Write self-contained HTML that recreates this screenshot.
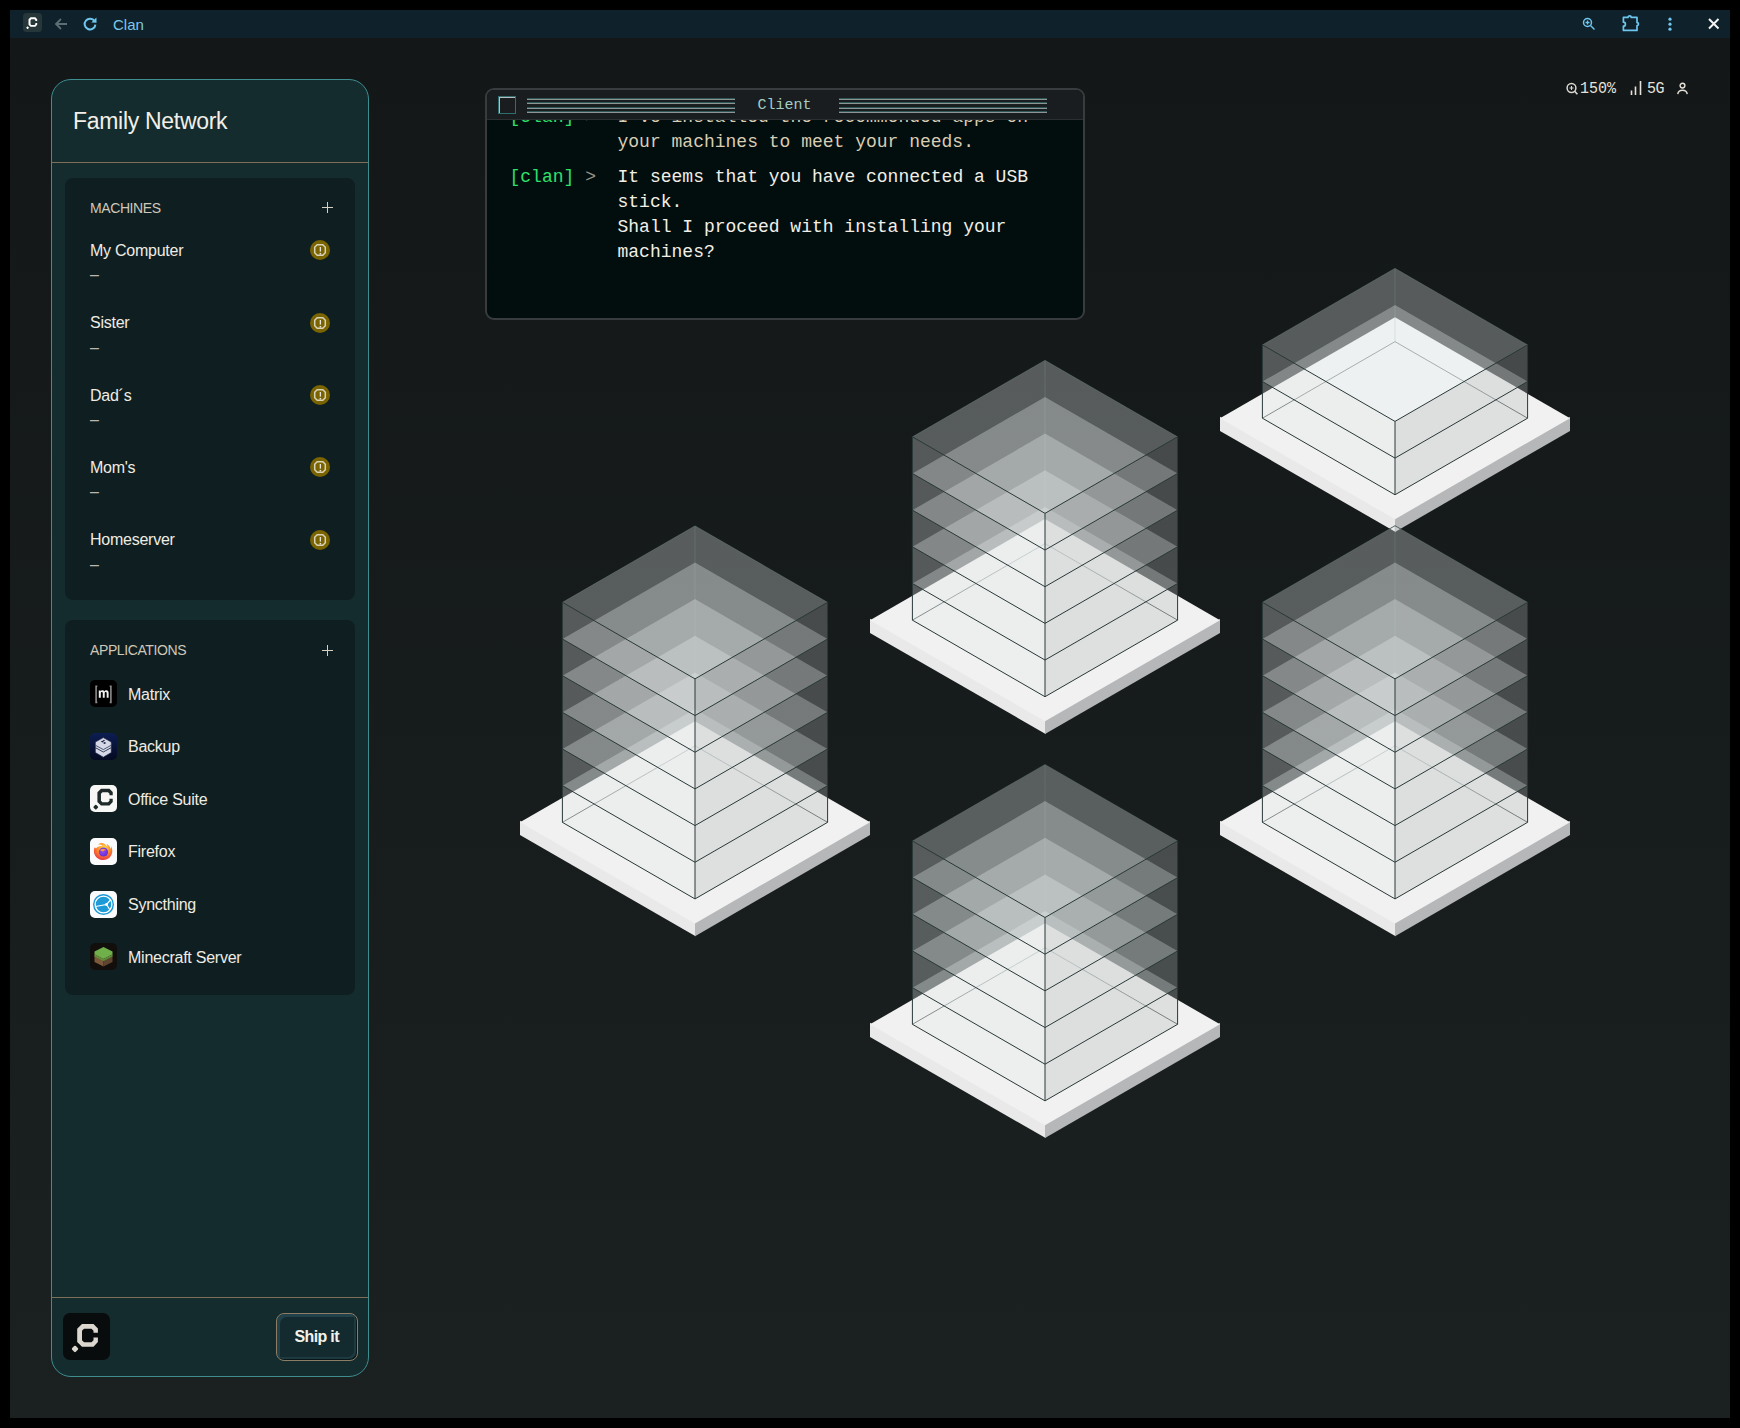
<!DOCTYPE html>
<html><head><meta charset="utf-8">
<style>
*{margin:0;padding:0;box-sizing:border-box}
html,body{width:1740px;height:1428px;background:#000;overflow:hidden;font-family:"Liberation Sans",sans-serif}
.a{position:absolute}
#main{left:10px;top:38px;width:1720px;height:1380px;background:linear-gradient(#131718,#1b2020)}
#tb{left:10px;top:10px;width:1720px;height:28px;background:#0f212a}
#scene{position:absolute;left:0;top:0}
#sb{left:51px;top:79px;width:318px;height:1298px;border:1px solid #3e8e90;border-radius:20px;background:#142c2e}
.t{position:absolute;white-space:nowrap;line-height:1}
.panel{position:absolute;left:65px;width:290px;background:#0f1f21;border-radius:8px}
.hdr{font-size:14px;color:#cfc8b8;letter-spacing:-0.4px}
.plus{position:absolute;width:11px;height:11px}
.plus:before{content:"";position:absolute;left:0;top:5px;width:11px;height:1.4px;background:#d6d0c2}
.plus:after{content:"";position:absolute;left:5px;top:0;width:1.4px;height:11px;background:#d6d0c2}
.mname{font-size:16px;color:#f0ece4;letter-spacing:-0.25px}
.dash{font-size:16px;color:#bdb8ad}
.warn{position:absolute;width:20px;height:20px}
.app{position:absolute;left:90px;width:27px;height:27px;border-radius:5px;overflow:hidden}
.aname{font-size:16px;color:#f0ece4;letter-spacing:-0.25px}
#chat{left:485px;top:88px;width:600px;height:232px;border:2px solid #383c3e;border-radius:9px;background:#020e0e;overflow:hidden}
#ctb{left:0;top:0;width:100%;height:30px;background:#191d1f;border-bottom:1px solid #2b3033}
.mono{font-family:"Liberation Mono",monospace}
.msg{font-size:18px;line-height:25px;white-space:pre}
.g{color:#2fe06c}.gr{color:#9b968c}.old{color:#d9cdb3}.new{color:#f3efe6}
.lines{position:absolute;height:16px}
.lines i{position:absolute;left:0;right:0;height:2px;border-top:1px solid #2f5656;}
.lines i:after{content:"";position:absolute;left:0;right:0;top:0;height:1px;background:#8d9494}
</style></head><body>
<div class="a" id="tb"></div>
<div class="a" id="main"></div>
<svg id="scene" width="1740" height="1428" viewBox="0 0 1740 1428"><polygon points="1220.00,416.70 1395.60,517.74 1395.60,531.99 1220.00,430.95" fill="#e9e9e9"/><polygon points="1395.00,517.74 1570.00,416.70 1570.00,430.95 1395.00,531.99" fill="#b5b7b9"/><polygon points="1220.00,418.20 1395.00,317.16 1570.00,418.20 1395.00,519.24" fill="#f1f1f1"/><polyline points="1262.40,418.20 1395.00,341.64 1527.60,418.20" fill="none" stroke="#2c3a3a" stroke-width="1" stroke-opacity="0.75"/><line x1="1395.00" y1="341.64" x2="1395.00" y2="268.30" stroke="#4a6e6e" stroke-width="1" stroke-opacity="0.3"/><polyline points="1262.40,344.86 1395.00,268.30 1527.60,344.86" fill="none" stroke="#2c3a3a" stroke-width="1" stroke-opacity="0.9"/><g fill="#ebf3f3" fill-opacity="0.170"><polygon points="1262.40,418.20 1395.00,341.64 1395.00,304.97 1262.40,381.53"/><polygon points="1395.00,341.64 1527.60,418.20 1527.60,381.53 1395.00,304.97"/><polygon points="1262.40,381.53 1395.00,304.97 1395.00,268.30 1262.40,344.86"/><polygon points="1395.00,304.97 1527.60,381.53 1527.60,344.86 1395.00,268.30"/><polygon points="1262.40,418.20 1395.00,341.64 1527.60,418.20 1395.00,494.76"/><polygon points="1262.40,381.53 1395.00,304.97 1527.60,381.53 1395.00,458.09"/><polygon points="1262.40,381.53 1395.00,304.97 1527.60,381.53 1395.00,458.09"/><polygon points="1262.40,344.86 1395.00,268.30 1527.60,344.86 1395.00,421.42"/></g><g fill-opacity="0.170"><polygon fill="#e4e4e4" points="1262.40,418.20 1395.00,494.76 1395.00,458.09 1262.40,381.53"/><polygon fill="#8a8a8a" points="1395.00,494.76 1527.60,418.20 1527.60,381.53 1395.00,458.09"/><polygon fill="#e4e4e4" points="1262.40,381.53 1395.00,458.09 1395.00,421.42 1262.40,344.86"/><polygon fill="#8a8a8a" points="1395.00,458.09 1527.60,381.53 1527.60,344.86 1395.00,421.42"/></g><g fill="none" stroke="#2a3838" stroke-width="1"><polyline points="1262.40,418.20 1395.00,494.76 1527.60,418.20"/><polyline points="1262.40,381.53 1395.00,458.09 1527.60,381.53"/><polyline points="1262.40,344.86 1395.00,421.42 1527.60,344.86"/><line x1="1262.40" y1="418.20" x2="1262.40" y2="344.86"/><line x1="1395.00" y1="494.76" x2="1395.00" y2="421.42"/><line x1="1527.60" y1="418.20" x2="1527.60" y2="344.86"/></g><polygon points="870.00,618.65 1045.60,719.69 1045.60,733.94 870.00,632.90" fill="#e9e9e9"/><polygon points="1045.00,719.69 1220.00,618.65 1220.00,632.90 1045.00,733.94" fill="#b5b7b9"/><polygon points="870.00,620.15 1045.00,519.11 1220.00,620.15 1045.00,721.19" fill="#f1f1f1"/><polyline points="912.40,620.15 1045.00,543.59 1177.60,620.15" fill="none" stroke="#2c3a3a" stroke-width="1" stroke-opacity="0.75"/><line x1="1045.00" y1="543.59" x2="1045.00" y2="360.24" stroke="#4a6e6e" stroke-width="1" stroke-opacity="0.3"/><polyline points="912.40,436.80 1045.00,360.24 1177.60,436.80" fill="none" stroke="#2c3a3a" stroke-width="1" stroke-opacity="0.9"/><g fill="#ebf3f3" fill-opacity="0.170"><polygon points="912.40,620.15 1045.00,543.59 1045.00,506.92 912.40,583.48"/><polygon points="1045.00,543.59 1177.60,620.15 1177.60,583.48 1045.00,506.92"/><polygon points="912.40,583.48 1045.00,506.92 1045.00,470.25 912.40,546.81"/><polygon points="1045.00,506.92 1177.60,583.48 1177.60,546.81 1045.00,470.25"/><polygon points="912.40,546.81 1045.00,470.25 1045.00,433.58 912.40,510.14"/><polygon points="1045.00,470.25 1177.60,546.81 1177.60,510.14 1045.00,433.58"/><polygon points="912.40,510.14 1045.00,433.58 1045.00,396.91 912.40,473.47"/><polygon points="1045.00,433.58 1177.60,510.14 1177.60,473.47 1045.00,396.91"/><polygon points="912.40,473.47 1045.00,396.91 1045.00,360.24 912.40,436.80"/><polygon points="1045.00,396.91 1177.60,473.47 1177.60,436.80 1045.00,360.24"/><polygon points="912.40,620.15 1045.00,543.59 1177.60,620.15 1045.00,696.71"/><polygon points="912.40,583.48 1045.00,506.92 1177.60,583.48 1045.00,660.04"/><polygon points="912.40,583.48 1045.00,506.92 1177.60,583.48 1045.00,660.04"/><polygon points="912.40,546.81 1045.00,470.25 1177.60,546.81 1045.00,623.37"/><polygon points="912.40,546.81 1045.00,470.25 1177.60,546.81 1045.00,623.37"/><polygon points="912.40,510.14 1045.00,433.58 1177.60,510.14 1045.00,586.70"/><polygon points="912.40,510.14 1045.00,433.58 1177.60,510.14 1045.00,586.70"/><polygon points="912.40,473.47 1045.00,396.91 1177.60,473.47 1045.00,550.03"/><polygon points="912.40,473.47 1045.00,396.91 1177.60,473.47 1045.00,550.03"/><polygon points="912.40,436.80 1045.00,360.24 1177.60,436.80 1045.00,513.36"/></g><g fill-opacity="0.170"><polygon fill="#e4e4e4" points="912.40,620.15 1045.00,696.71 1045.00,660.04 912.40,583.48"/><polygon fill="#8a8a8a" points="1045.00,696.71 1177.60,620.15 1177.60,583.48 1045.00,660.04"/><polygon fill="#e4e4e4" points="912.40,583.48 1045.00,660.04 1045.00,623.37 912.40,546.81"/><polygon fill="#8a8a8a" points="1045.00,660.04 1177.60,583.48 1177.60,546.81 1045.00,623.37"/><polygon fill="#e4e4e4" points="912.40,546.81 1045.00,623.37 1045.00,586.70 912.40,510.14"/><polygon fill="#8a8a8a" points="1045.00,623.37 1177.60,546.81 1177.60,510.14 1045.00,586.70"/><polygon fill="#e4e4e4" points="912.40,510.14 1045.00,586.70 1045.00,550.03 912.40,473.47"/><polygon fill="#8a8a8a" points="1045.00,586.70 1177.60,510.14 1177.60,473.47 1045.00,550.03"/><polygon fill="#e4e4e4" points="912.40,473.47 1045.00,550.03 1045.00,513.36 912.40,436.80"/><polygon fill="#8a8a8a" points="1045.00,550.03 1177.60,473.47 1177.60,436.80 1045.00,513.36"/></g><g fill="none" stroke="#2a3838" stroke-width="1"><polyline points="912.40,620.15 1045.00,696.71 1177.60,620.15"/><polyline points="912.40,583.48 1045.00,660.04 1177.60,583.48"/><polyline points="912.40,546.81 1045.00,623.37 1177.60,546.81"/><polyline points="912.40,510.14 1045.00,586.70 1177.60,510.14"/><polyline points="912.40,473.47 1045.00,550.03 1177.60,473.47"/><polyline points="912.40,436.80 1045.00,513.36 1177.60,436.80"/><line x1="912.40" y1="620.15" x2="912.40" y2="436.80"/><line x1="1045.00" y1="696.71" x2="1045.00" y2="513.36"/><line x1="1177.60" y1="620.15" x2="1177.60" y2="436.80"/></g><polygon points="520.00,820.85 695.60,921.89 695.60,936.14 520.00,835.10" fill="#e9e9e9"/><polygon points="695.00,921.89 870.00,820.85 870.00,835.10 695.00,936.14" fill="#b5b7b9"/><polygon points="520.00,822.35 695.00,721.31 870.00,822.35 695.00,923.39" fill="#f1f1f1"/><polyline points="562.40,822.35 695.00,745.79 827.60,822.35" fill="none" stroke="#2c3a3a" stroke-width="1" stroke-opacity="0.75"/><line x1="695.00" y1="745.79" x2="695.00" y2="525.77" stroke="#4a6e6e" stroke-width="1" stroke-opacity="0.3"/><polyline points="562.40,602.33 695.00,525.77 827.60,602.33" fill="none" stroke="#2c3a3a" stroke-width="1" stroke-opacity="0.9"/><g fill="#ebf3f3" fill-opacity="0.170"><polygon points="562.40,822.35 695.00,745.79 695.00,709.12 562.40,785.68"/><polygon points="695.00,745.79 827.60,822.35 827.60,785.68 695.00,709.12"/><polygon points="562.40,785.68 695.00,709.12 695.00,672.45 562.40,749.01"/><polygon points="695.00,709.12 827.60,785.68 827.60,749.01 695.00,672.45"/><polygon points="562.40,749.01 695.00,672.45 695.00,635.78 562.40,712.34"/><polygon points="695.00,672.45 827.60,749.01 827.60,712.34 695.00,635.78"/><polygon points="562.40,712.34 695.00,635.78 695.00,599.11 562.40,675.67"/><polygon points="695.00,635.78 827.60,712.34 827.60,675.67 695.00,599.11"/><polygon points="562.40,675.67 695.00,599.11 695.00,562.44 562.40,639.00"/><polygon points="695.00,599.11 827.60,675.67 827.60,639.00 695.00,562.44"/><polygon points="562.40,639.00 695.00,562.44 695.00,525.77 562.40,602.33"/><polygon points="695.00,562.44 827.60,639.00 827.60,602.33 695.00,525.77"/><polygon points="562.40,822.35 695.00,745.79 827.60,822.35 695.00,898.91"/><polygon points="562.40,785.68 695.00,709.12 827.60,785.68 695.00,862.24"/><polygon points="562.40,785.68 695.00,709.12 827.60,785.68 695.00,862.24"/><polygon points="562.40,749.01 695.00,672.45 827.60,749.01 695.00,825.57"/><polygon points="562.40,749.01 695.00,672.45 827.60,749.01 695.00,825.57"/><polygon points="562.40,712.34 695.00,635.78 827.60,712.34 695.00,788.90"/><polygon points="562.40,712.34 695.00,635.78 827.60,712.34 695.00,788.90"/><polygon points="562.40,675.67 695.00,599.11 827.60,675.67 695.00,752.23"/><polygon points="562.40,675.67 695.00,599.11 827.60,675.67 695.00,752.23"/><polygon points="562.40,639.00 695.00,562.44 827.60,639.00 695.00,715.56"/><polygon points="562.40,639.00 695.00,562.44 827.60,639.00 695.00,715.56"/><polygon points="562.40,602.33 695.00,525.77 827.60,602.33 695.00,678.89"/></g><g fill-opacity="0.170"><polygon fill="#e4e4e4" points="562.40,822.35 695.00,898.91 695.00,862.24 562.40,785.68"/><polygon fill="#8a8a8a" points="695.00,898.91 827.60,822.35 827.60,785.68 695.00,862.24"/><polygon fill="#e4e4e4" points="562.40,785.68 695.00,862.24 695.00,825.57 562.40,749.01"/><polygon fill="#8a8a8a" points="695.00,862.24 827.60,785.68 827.60,749.01 695.00,825.57"/><polygon fill="#e4e4e4" points="562.40,749.01 695.00,825.57 695.00,788.90 562.40,712.34"/><polygon fill="#8a8a8a" points="695.00,825.57 827.60,749.01 827.60,712.34 695.00,788.90"/><polygon fill="#e4e4e4" points="562.40,712.34 695.00,788.90 695.00,752.23 562.40,675.67"/><polygon fill="#8a8a8a" points="695.00,788.90 827.60,712.34 827.60,675.67 695.00,752.23"/><polygon fill="#e4e4e4" points="562.40,675.67 695.00,752.23 695.00,715.56 562.40,639.00"/><polygon fill="#8a8a8a" points="695.00,752.23 827.60,675.67 827.60,639.00 695.00,715.56"/><polygon fill="#e4e4e4" points="562.40,639.00 695.00,715.56 695.00,678.89 562.40,602.33"/><polygon fill="#8a8a8a" points="695.00,715.56 827.60,639.00 827.60,602.33 695.00,678.89"/></g><g fill="none" stroke="#2a3838" stroke-width="1"><polyline points="562.40,822.35 695.00,898.91 827.60,822.35"/><polyline points="562.40,785.68 695.00,862.24 827.60,785.68"/><polyline points="562.40,749.01 695.00,825.57 827.60,749.01"/><polyline points="562.40,712.34 695.00,788.90 827.60,712.34"/><polyline points="562.40,675.67 695.00,752.23 827.60,675.67"/><polyline points="562.40,639.00 695.00,715.56 827.60,639.00"/><polyline points="562.40,602.33 695.00,678.89 827.60,602.33"/><line x1="562.40" y1="822.35" x2="562.40" y2="602.33"/><line x1="695.00" y1="898.91" x2="695.00" y2="678.89"/><line x1="827.60" y1="822.35" x2="827.60" y2="602.33"/></g><polygon points="1220.00,820.85 1395.60,921.89 1395.60,936.14 1220.00,835.10" fill="#e9e9e9"/><polygon points="1395.00,921.89 1570.00,820.85 1570.00,835.10 1395.00,936.14" fill="#b5b7b9"/><polygon points="1220.00,822.35 1395.00,721.31 1570.00,822.35 1395.00,923.39" fill="#f1f1f1"/><polyline points="1262.40,822.35 1395.00,745.79 1527.60,822.35" fill="none" stroke="#2c3a3a" stroke-width="1" stroke-opacity="0.75"/><line x1="1395.00" y1="745.79" x2="1395.00" y2="525.77" stroke="#4a6e6e" stroke-width="1" stroke-opacity="0.3"/><polyline points="1262.40,602.33 1395.00,525.77 1527.60,602.33" fill="none" stroke="#2c3a3a" stroke-width="1" stroke-opacity="0.9"/><g fill="#ebf3f3" fill-opacity="0.170"><polygon points="1262.40,822.35 1395.00,745.79 1395.00,709.12 1262.40,785.68"/><polygon points="1395.00,745.79 1527.60,822.35 1527.60,785.68 1395.00,709.12"/><polygon points="1262.40,785.68 1395.00,709.12 1395.00,672.45 1262.40,749.01"/><polygon points="1395.00,709.12 1527.60,785.68 1527.60,749.01 1395.00,672.45"/><polygon points="1262.40,749.01 1395.00,672.45 1395.00,635.78 1262.40,712.34"/><polygon points="1395.00,672.45 1527.60,749.01 1527.60,712.34 1395.00,635.78"/><polygon points="1262.40,712.34 1395.00,635.78 1395.00,599.11 1262.40,675.67"/><polygon points="1395.00,635.78 1527.60,712.34 1527.60,675.67 1395.00,599.11"/><polygon points="1262.40,675.67 1395.00,599.11 1395.00,562.44 1262.40,639.00"/><polygon points="1395.00,599.11 1527.60,675.67 1527.60,639.00 1395.00,562.44"/><polygon points="1262.40,639.00 1395.00,562.44 1395.00,525.77 1262.40,602.33"/><polygon points="1395.00,562.44 1527.60,639.00 1527.60,602.33 1395.00,525.77"/><polygon points="1262.40,822.35 1395.00,745.79 1527.60,822.35 1395.00,898.91"/><polygon points="1262.40,785.68 1395.00,709.12 1527.60,785.68 1395.00,862.24"/><polygon points="1262.40,785.68 1395.00,709.12 1527.60,785.68 1395.00,862.24"/><polygon points="1262.40,749.01 1395.00,672.45 1527.60,749.01 1395.00,825.57"/><polygon points="1262.40,749.01 1395.00,672.45 1527.60,749.01 1395.00,825.57"/><polygon points="1262.40,712.34 1395.00,635.78 1527.60,712.34 1395.00,788.90"/><polygon points="1262.40,712.34 1395.00,635.78 1527.60,712.34 1395.00,788.90"/><polygon points="1262.40,675.67 1395.00,599.11 1527.60,675.67 1395.00,752.23"/><polygon points="1262.40,675.67 1395.00,599.11 1527.60,675.67 1395.00,752.23"/><polygon points="1262.40,639.00 1395.00,562.44 1527.60,639.00 1395.00,715.56"/><polygon points="1262.40,639.00 1395.00,562.44 1527.60,639.00 1395.00,715.56"/><polygon points="1262.40,602.33 1395.00,525.77 1527.60,602.33 1395.00,678.89"/></g><g fill-opacity="0.170"><polygon fill="#e4e4e4" points="1262.40,822.35 1395.00,898.91 1395.00,862.24 1262.40,785.68"/><polygon fill="#8a8a8a" points="1395.00,898.91 1527.60,822.35 1527.60,785.68 1395.00,862.24"/><polygon fill="#e4e4e4" points="1262.40,785.68 1395.00,862.24 1395.00,825.57 1262.40,749.01"/><polygon fill="#8a8a8a" points="1395.00,862.24 1527.60,785.68 1527.60,749.01 1395.00,825.57"/><polygon fill="#e4e4e4" points="1262.40,749.01 1395.00,825.57 1395.00,788.90 1262.40,712.34"/><polygon fill="#8a8a8a" points="1395.00,825.57 1527.60,749.01 1527.60,712.34 1395.00,788.90"/><polygon fill="#e4e4e4" points="1262.40,712.34 1395.00,788.90 1395.00,752.23 1262.40,675.67"/><polygon fill="#8a8a8a" points="1395.00,788.90 1527.60,712.34 1527.60,675.67 1395.00,752.23"/><polygon fill="#e4e4e4" points="1262.40,675.67 1395.00,752.23 1395.00,715.56 1262.40,639.00"/><polygon fill="#8a8a8a" points="1395.00,752.23 1527.60,675.67 1527.60,639.00 1395.00,715.56"/><polygon fill="#e4e4e4" points="1262.40,639.00 1395.00,715.56 1395.00,678.89 1262.40,602.33"/><polygon fill="#8a8a8a" points="1395.00,715.56 1527.60,639.00 1527.60,602.33 1395.00,678.89"/></g><g fill="none" stroke="#2a3838" stroke-width="1"><polyline points="1262.40,822.35 1395.00,898.91 1527.60,822.35"/><polyline points="1262.40,785.68 1395.00,862.24 1527.60,785.68"/><polyline points="1262.40,749.01 1395.00,825.57 1527.60,749.01"/><polyline points="1262.40,712.34 1395.00,788.90 1527.60,712.34"/><polyline points="1262.40,675.67 1395.00,752.23 1527.60,675.67"/><polyline points="1262.40,639.00 1395.00,715.56 1527.60,639.00"/><polyline points="1262.40,602.33 1395.00,678.89 1527.60,602.33"/><line x1="1262.40" y1="822.35" x2="1262.40" y2="602.33"/><line x1="1395.00" y1="898.91" x2="1395.00" y2="678.89"/><line x1="1527.60" y1="822.35" x2="1527.60" y2="602.33"/></g><polygon points="870.00,1022.80 1045.60,1123.84 1045.60,1138.09 870.00,1037.05" fill="#e9e9e9"/><polygon points="1045.00,1123.84 1220.00,1022.80 1220.00,1037.05 1045.00,1138.09" fill="#b5b7b9"/><polygon points="870.00,1024.30 1045.00,923.26 1220.00,1024.30 1045.00,1125.34" fill="#f1f1f1"/><polyline points="912.40,1024.30 1045.00,947.74 1177.60,1024.30" fill="none" stroke="#2c3a3a" stroke-width="1" stroke-opacity="0.75"/><line x1="1045.00" y1="947.74" x2="1045.00" y2="764.39" stroke="#4a6e6e" stroke-width="1" stroke-opacity="0.3"/><polyline points="912.40,840.95 1045.00,764.39 1177.60,840.95" fill="none" stroke="#2c3a3a" stroke-width="1" stroke-opacity="0.9"/><g fill="#ebf3f3" fill-opacity="0.170"><polygon points="912.40,1024.30 1045.00,947.74 1045.00,911.07 912.40,987.63"/><polygon points="1045.00,947.74 1177.60,1024.30 1177.60,987.63 1045.00,911.07"/><polygon points="912.40,987.63 1045.00,911.07 1045.00,874.40 912.40,950.96"/><polygon points="1045.00,911.07 1177.60,987.63 1177.60,950.96 1045.00,874.40"/><polygon points="912.40,950.96 1045.00,874.40 1045.00,837.73 912.40,914.29"/><polygon points="1045.00,874.40 1177.60,950.96 1177.60,914.29 1045.00,837.73"/><polygon points="912.40,914.29 1045.00,837.73 1045.00,801.06 912.40,877.62"/><polygon points="1045.00,837.73 1177.60,914.29 1177.60,877.62 1045.00,801.06"/><polygon points="912.40,877.62 1045.00,801.06 1045.00,764.39 912.40,840.95"/><polygon points="1045.00,801.06 1177.60,877.62 1177.60,840.95 1045.00,764.39"/><polygon points="912.40,1024.30 1045.00,947.74 1177.60,1024.30 1045.00,1100.86"/><polygon points="912.40,987.63 1045.00,911.07 1177.60,987.63 1045.00,1064.19"/><polygon points="912.40,987.63 1045.00,911.07 1177.60,987.63 1045.00,1064.19"/><polygon points="912.40,950.96 1045.00,874.40 1177.60,950.96 1045.00,1027.52"/><polygon points="912.40,950.96 1045.00,874.40 1177.60,950.96 1045.00,1027.52"/><polygon points="912.40,914.29 1045.00,837.73 1177.60,914.29 1045.00,990.85"/><polygon points="912.40,914.29 1045.00,837.73 1177.60,914.29 1045.00,990.85"/><polygon points="912.40,877.62 1045.00,801.06 1177.60,877.62 1045.00,954.18"/><polygon points="912.40,877.62 1045.00,801.06 1177.60,877.62 1045.00,954.18"/><polygon points="912.40,840.95 1045.00,764.39 1177.60,840.95 1045.00,917.51"/></g><g fill-opacity="0.170"><polygon fill="#e4e4e4" points="912.40,1024.30 1045.00,1100.86 1045.00,1064.19 912.40,987.63"/><polygon fill="#8a8a8a" points="1045.00,1100.86 1177.60,1024.30 1177.60,987.63 1045.00,1064.19"/><polygon fill="#e4e4e4" points="912.40,987.63 1045.00,1064.19 1045.00,1027.52 912.40,950.96"/><polygon fill="#8a8a8a" points="1045.00,1064.19 1177.60,987.63 1177.60,950.96 1045.00,1027.52"/><polygon fill="#e4e4e4" points="912.40,950.96 1045.00,1027.52 1045.00,990.85 912.40,914.29"/><polygon fill="#8a8a8a" points="1045.00,1027.52 1177.60,950.96 1177.60,914.29 1045.00,990.85"/><polygon fill="#e4e4e4" points="912.40,914.29 1045.00,990.85 1045.00,954.18 912.40,877.62"/><polygon fill="#8a8a8a" points="1045.00,990.85 1177.60,914.29 1177.60,877.62 1045.00,954.18"/><polygon fill="#e4e4e4" points="912.40,877.62 1045.00,954.18 1045.00,917.51 912.40,840.95"/><polygon fill="#8a8a8a" points="1045.00,954.18 1177.60,877.62 1177.60,840.95 1045.00,917.51"/></g><g fill="none" stroke="#2a3838" stroke-width="1"><polyline points="912.40,1024.30 1045.00,1100.86 1177.60,1024.30"/><polyline points="912.40,987.63 1045.00,1064.19 1177.60,987.63"/><polyline points="912.40,950.96 1045.00,1027.52 1177.60,950.96"/><polyline points="912.40,914.29 1045.00,990.85 1177.60,914.29"/><polyline points="912.40,877.62 1045.00,954.18 1177.60,877.62"/><polyline points="912.40,840.95 1045.00,917.51 1177.60,840.95"/><line x1="912.40" y1="1024.30" x2="912.40" y2="840.95"/><line x1="1045.00" y1="1100.86" x2="1045.00" y2="917.51"/><line x1="1177.60" y1="1024.30" x2="1177.60" y2="840.95"/></g></svg>
<!-- titlebar -->
<svg class="a" style="left:23px;top:13px" width="19" height="19" viewBox="0 0 19 19"><rect x="0" y="0" width="19" height="19" rx="3.5" fill="#263639"/><g transform="translate(-0.46 -0.32) scale(0.42)"><path d="M19 11H30.5L34.9 15.4V19.8H30.5V17.8L28.5 15.8H21L19 17.8V27.3L21 29.3H28.5L30.5 27.3V24.5H34.9V28.9L30.5 33.7H19L14.2 28.9V15.8Z" fill="#fff"/><rect x="9.4" y="33.3" width="5.2" height="5.2" rx="1.2" fill="#fff" transform="rotate(45 12 35.9)"/></g></svg>
<svg class="a" style="left:54px;top:17px" width="14" height="14" viewBox="0 0 14 14"><path d="M13 7H2M7 2L2 7l5 5" fill="none" stroke="#5d6d74" stroke-width="1.8"/></svg>
<svg class="a" style="left:82px;top:16px" width="16" height="16" viewBox="0 0 16 16"><path d="M12.6 5.2A5.4 5.4 0 1 0 13.4 8.6" fill="none" stroke="#6ec6ee" stroke-width="2"/><path d="M9.3 6.6L14.6 6.8 14.4 1.6z" fill="#6ec6ee"/></svg>
<div class="t" style="left:113px;top:17px;font-size:15px;color:#7cc8ea">Clan</div>
<svg class="a" style="left:1582px;top:17px" width="14" height="14" viewBox="0 0 14 14"><circle cx="5.5" cy="5.5" r="4" fill="none" stroke="#6ec6ee" stroke-width="1.5"/><path d="M8.5 8.5l4 4" stroke="#6ec6ee" stroke-width="1.5"/><path d="M5.5 3.5v4M3.5 5.5h4" stroke="#6ec6ee" stroke-width="1.3"/></svg>
<svg class="a" style="left:1621px;top:14px" width="20" height="19" viewBox="0 0 20 19"><path d="M2.4 3.4H7A1.6 1.6 0 0 1 10.2 3.4H16V8.6A1.5 1.5 0 0 1 16 11.6V16.4H2.4V12.2A2 2 0 0 0 2.4 8.2Z" fill="none" stroke="#6ec6ee" stroke-width="1.7" stroke-linejoin="round"/></svg>
<svg class="a" style="left:1666px;top:17px" width="8" height="15" viewBox="0 0 8 15"><circle cx="4" cy="2.2" r="1.6" fill="#6ec6ee"/><circle cx="4" cy="7.2" r="1.6" fill="#6ec6ee"/><circle cx="4" cy="12.2" r="1.6" fill="#6ec6ee"/></svg>
<svg class="a" style="left:1707px;top:17px" width="13" height="13" viewBox="0 0 13 13"><path d="M2 2l9.5 9.5M11.5 2L2 11.5" stroke="#f4f4f4" stroke-width="2"/></svg>

<!-- sidebar -->
<div class="a" id="sb"></div>
<div class="t" style="left:73px;top:110px;font-size:23px;color:#f2efe8;letter-spacing:-0.3px">Family Network</div>
<div class="a" style="left:52px;top:161.5px;width:316px;height:1px;background:#7d6f58"></div>
<div class="panel" style="top:178px;height:422px"></div>
<div class="t hdr" style="left:90px;top:200.5px">MACHINES</div>
<div class="plus" style="left:322px;top:202px"></div>
<div class="t mname" style="left:90px;top:242.7px">My Computer</div>
<div class="t dash" style="left:90px;top:267.2px">–</div>
<svg class="warn" style="left:310px;top:240.1px" viewBox="0 0 20 20"><circle cx="10" cy="10" r="10" fill="#7a6400"/><path d="M7.2 4.7h5.6l2.5 2.5v5.6l-2.5 2.5h-5.6l-2.5-2.5v-5.6z" fill="none" stroke="#d8d2bc" stroke-width="1.5"/><rect x="9.7" y="7" width="1.3" height="4.6" fill="#e6e2d6"/><rect x="9.6" y="12.9" width="1.5" height="1.5" fill="#e6e2d6"/></svg>
<div class="t mname" style="left:90px;top:315.1px">Sister</div>
<div class="t dash" style="left:90px;top:339.6px">–</div>
<svg class="warn" style="left:310px;top:312.5px" viewBox="0 0 20 20"><circle cx="10" cy="10" r="10" fill="#7a6400"/><path d="M7.2 4.7h5.6l2.5 2.5v5.6l-2.5 2.5h-5.6l-2.5-2.5v-5.6z" fill="none" stroke="#d8d2bc" stroke-width="1.5"/><rect x="9.7" y="7" width="1.3" height="4.6" fill="#e6e2d6"/><rect x="9.6" y="12.9" width="1.5" height="1.5" fill="#e6e2d6"/></svg>
<div class="t mname" style="left:90px;top:387.5px">Dad´s</div>
<div class="t dash" style="left:90px;top:412.0px">–</div>
<svg class="warn" style="left:310px;top:384.9px" viewBox="0 0 20 20"><circle cx="10" cy="10" r="10" fill="#7a6400"/><path d="M7.2 4.7h5.6l2.5 2.5v5.6l-2.5 2.5h-5.6l-2.5-2.5v-5.6z" fill="none" stroke="#d8d2bc" stroke-width="1.5"/><rect x="9.7" y="7" width="1.3" height="4.6" fill="#e6e2d6"/><rect x="9.6" y="12.9" width="1.5" height="1.5" fill="#e6e2d6"/></svg>
<div class="t mname" style="left:90px;top:459.9px">Mom's</div>
<div class="t dash" style="left:90px;top:484.4px">–</div>
<svg class="warn" style="left:310px;top:457.3px" viewBox="0 0 20 20"><circle cx="10" cy="10" r="10" fill="#7a6400"/><path d="M7.2 4.7h5.6l2.5 2.5v5.6l-2.5 2.5h-5.6l-2.5-2.5v-5.6z" fill="none" stroke="#d8d2bc" stroke-width="1.5"/><rect x="9.7" y="7" width="1.3" height="4.6" fill="#e6e2d6"/><rect x="9.6" y="12.9" width="1.5" height="1.5" fill="#e6e2d6"/></svg>
<div class="t mname" style="left:90px;top:532.3px">Homeserver</div>
<div class="t dash" style="left:90px;top:556.8px">–</div>
<svg class="warn" style="left:310px;top:529.7px" viewBox="0 0 20 20"><circle cx="10" cy="10" r="10" fill="#7a6400"/><path d="M7.2 4.7h5.6l2.5 2.5v5.6l-2.5 2.5h-5.6l-2.5-2.5v-5.6z" fill="none" stroke="#d8d2bc" stroke-width="1.5"/><rect x="9.7" y="7" width="1.3" height="4.6" fill="#e6e2d6"/><rect x="9.6" y="12.9" width="1.5" height="1.5" fill="#e6e2d6"/></svg>
<div class="panel" style="top:620px;height:375px"></div>
<div class="t hdr" style="left:90px;top:642.5px">APPLICATIONS</div>
<div class="plus" style="left:322px;top:644.5px"></div>
<div class="app" style="top:680.0px;background:#000"><svg width="27" height="27" viewBox="0 0 27 27"><path d="M7.3 6.2h-1.2v16.2h1.2M19.7 6.2h1.2v16.2h-1.2" fill="none" stroke="#8c8c8c" stroke-width="1.6"/><path d="M8.8 17.7v-7.3h1.8v1c0.5-0.8 1.2-1.1 2-1.1 0.9 0 1.5 0.4 1.8 1.1 0.5-0.8 1.2-1.1 2-1.1 1.5 0 2.2 0.9 2.2 2.5v4.9h-1.9v-4.5c0-0.8-0.3-1.2-0.9-1.2-0.7 0-1.1 0.5-1.1 1.4v4.3h-1.9v-4.5c0-0.8-0.3-1.2-0.9-1.2-0.7 0-1.1 0.5-1.1 1.4v4.3z" fill="#f2f2f2"/></svg></div>
<div class="t aname" style="left:128px;top:686.5px">Matrix</div>
<div class="app" style="top:732.6px;background:linear-gradient(#0c1d52,#040a22)"><svg width="27" height="27" viewBox="0 0 27 27"><g fill="#d4d8e6" stroke="#1a2040" stroke-width="0.7"><path d="M13.3 18.6l-8-4.2v5.2l8 4.6 8-4.6v-5.2z"/><path d="M13.3 14.2l-8-4.2v4.6l8 4.4 8-4.4v-4.6z"/><path d="M13.3 4.6l8 4.4v3.2l-8 4.4-8-4.4v-3.2z"/></g><path d="M10.8 8.6l1.6-0.9 1.6 0.9-1.6 0.9zM13 10l1.6-0.9 1.6 0.9-1.6 0.9zM12.6 7.4l1.3-0.7 1.3 0.7-1.3 0.7z" fill="#1a2040"/></svg></div>
<div class="t aname" style="left:128px;top:739.1px">Backup</div>
<div class="app" style="top:785.3px;background:#f7f7f5"><svg width="27" height="27" viewBox="0 0 27 27"><g transform="translate(-3.1 -4.44) scale(0.74)"><path d="M19 11H30.5L34.9 15.4V19.8H30.5V17.8L28.5 15.8H21L19 17.8V27.3L21 29.3H28.5L30.5 27.3V24.5H34.9V28.9L30.5 33.7H19L14.2 28.9V15.8Z" fill="#1e2a2a"/><rect x="9.4" y="33.3" width="5.2" height="5.2" rx="1.2" fill="#1e2a2a" transform="rotate(45 12 35.9)"/></g></svg></div>
<div class="t aname" style="left:128px;top:791.8px">Office Suite</div>
<div class="app" style="top:838.0px;background:#fbfbfb"><svg width="27" height="27" viewBox="0 0 27 27"><defs><radialGradient id="ff" cx="0.55" cy="0.3" r="0.8"><stop offset="0" stop-color="#ffe34a"/><stop offset="0.45" stop-color="#ff8a2a"/><stop offset="1" stop-color="#e5204a"/></radialGradient><radialGradient id="fp" cx="0.4" cy="0.4" r="0.7"><stop offset="0" stop-color="#9a4cf0"/><stop offset="1" stop-color="#5a2ad0"/></radialGradient></defs><path d="M4.6 9.5c-0.9 2-1 4.6 0 6.9 1.4 3.4 4.9 5.6 8.7 5.6 5 0 9-4 9-9 0-1.7-0.5-3.3-1.3-4.7 0.2 1 0.1 2-0.2 2.8-0.6-2.5-2.3-4.4-4.3-5.2 0.6 0.9 0.9 1.9 0.9 2.9-1-1.6-2.6-3-4.4-3.6-1.8-0.5-3.6 0.1-4.8 1.4 1.6-0.4 3.2 0 4.3 1.1-2.5 0-5 1-6.6 2.7-0.4-0.6-0.9-1.3-1.3-0.9z" fill="url(#ff)"/><circle cx="13.5" cy="14" r="4.6" fill="url(#fp)"/><path d="M10 12.5c1.5-1.8 4.5-2 6.5-0.2-1.6-0.4-3 0.2-3.6 1.3-1-0.8-2-1.2-2.9-1.1z" fill="#ff9a3a"/></svg></div>
<div class="t aname" style="left:128px;top:844.4px">Firefox</div>
<div class="app" style="top:890.6px;background:#fbfbfb"><svg width="27" height="27" viewBox="0 0 27 27"><circle cx="13.5" cy="13.5" r="10.5" fill="#1e9ad6"/><circle cx="13.5" cy="13.5" r="8.4" fill="none" stroke="#fff" stroke-width="1.3"/><path d="M5.5 15.5l11-2 4.5-5M16.5 13.5l3.5 5.5" fill="none" stroke="#fff" stroke-width="1.2"/><circle cx="16.5" cy="13.5" r="1.4" fill="#fff"/></svg></div>
<div class="t aname" style="left:128px;top:897.1px">Syncthing</div>
<div class="app" style="top:943.2px;background:#120e0c"><svg width="27" height="27" viewBox="0 0 27 27"><path d="M13.5 4l9 4.5v3l-9 4.5-9-4.5v-3z" fill="#6fb04a"/><path d="M4.5 11.5l9 4.5v7.5l-9-4.5z" fill="#7a5a3a"/><path d="M22.5 11.5l-9 4.5v7.5l9-4.5z" fill="#5e4530"/><path d="M4.5 11.5l9 4.5 9-4.5v2l-9 4.5-9-4.5z" fill="#5a9a38" opacity="0.9"/></svg></div>
<div class="t aname" style="left:128px;top:949.7px">Minecraft Server</div>
<div class="a" style="left:52px;top:1296.5px;width:316px;height:1px;background:#7d6f58"></div>
<svg class="a" style="left:63px;top:1313px" width="47" height="47" viewBox="0 0 47 47"><rect width="47" height="47" rx="7" fill="#080c0c"/><path d="M19 11H30.5L34.9 15.4V19.8H30.5V17.8L28.5 15.8H21L19 17.8V27.3L21 29.3H28.5L30.5 27.3V24.5H34.9V28.9L30.5 33.7H19L14.2 28.9V15.8Z" fill="#ddd8cf"/><rect x="9.4" y="33.3" width="5.2" height="5.2" rx="1.2" fill="#ddd8cf" transform="rotate(45 12 35.9)"/></svg>
<div class="a" style="left:276px;top:1313px;width:82px;height:48px;border:1px solid #8d7d64;border-radius:8px;background:#132a2e;box-shadow:inset -1px -1px 0 #08161a,inset 3px 3px 0 #21424a,inset -3px -3px 0 #1d3a40"></div>
<div class="t" style="left:294.5px;top:1329px;font-size:16px;font-weight:bold;color:#f4f1ea;letter-spacing:-0.65px">Ship it</div>

<!-- chat -->
<div class="a" id="chat">
 <div class="a mono msg" style="left:22.5px;top:14.9px"><span class="g">[clan]</span> <span class="gr">&gt;</span>  <span class="old">I've installed the recommended apps on
          your machines to meet your needs.</span></div>
 <div class="a mono msg" style="left:22.5px;top:75.3px"><span class="g">[clan]</span> <span class="gr">&gt;</span>  <span class="new">It seems that you have connected a USB
          stick.
          Shall I proceed with installing your
          machines?</span></div>
 <div class="a" id="ctb">
  <div class="a" style="left:10.5px;top:5.5px;width:18px;height:18px;border:1px solid #2f6e6e;box-shadow:inset 1px 1px 0 #bcbcbc"></div>
  <div class="lines" style="left:39.5px;top:7.5px;width:208px"><i style="top:0"></i><i style="top:4px"></i><i style="top:9px"></i><i style="top:13px"></i></div>
  <div class="t mono" style="left:270.5px;top:7px;font-size:15px;line-height:17px;color:#a4cdc6">Client</div>
  <div class="lines" style="left:351.5px;top:7.5px;width:208px"><i style="top:0"></i><i style="top:4px"></i><i style="top:9px"></i><i style="top:13px"></i></div>
 </div>
</div>

<!-- status -->
<svg class="a" style="left:1564px;top:81px" width="16" height="16" viewBox="0 0 16 16"><circle cx="7.5" cy="7" r="4.4" fill="none" stroke="#dcd8d0" stroke-width="1.5"/><path d="M10.6 10.2l2.8 3" stroke="#dcd8d0" stroke-width="1.6"/><path d="M7.5 5v4M5.5 7h4" stroke="#dcd8d0" stroke-width="1.1"/></svg>
<div class="t mono" style="left:1580px;top:81.5px;font-size:15px;color:#e6e2da;transform:scaleY(1.08);transform-origin:0 100%">150%</div>
<svg class="a" style="left:1630px;top:80px" width="12" height="15" viewBox="0 0 12 15"><path d="M1.5 15v-4.5M5.5 15v-8.5M10.5 15v-14" stroke="#e6e2da" stroke-width="1.6"/></svg>
<div class="t mono" style="left:1647px;top:81.5px;font-size:15px;color:#e6e2da;letter-spacing:-0.5px;transform:scaleY(1.08);transform-origin:0 100%">5G</div>
<svg class="a" style="left:1676px;top:82px" width="13" height="13" viewBox="0 0 13 13"><circle cx="6.5" cy="3.6" r="2.4" fill="none" stroke="#e6e2da" stroke-width="1.4"/><path d="M1.8 12.2c0.3-2.6 2.1-3.9 4.7-3.9s4.4 1.3 4.7 3.9" fill="none" stroke="#e6e2da" stroke-width="1.4"/></svg>
</body></html>
